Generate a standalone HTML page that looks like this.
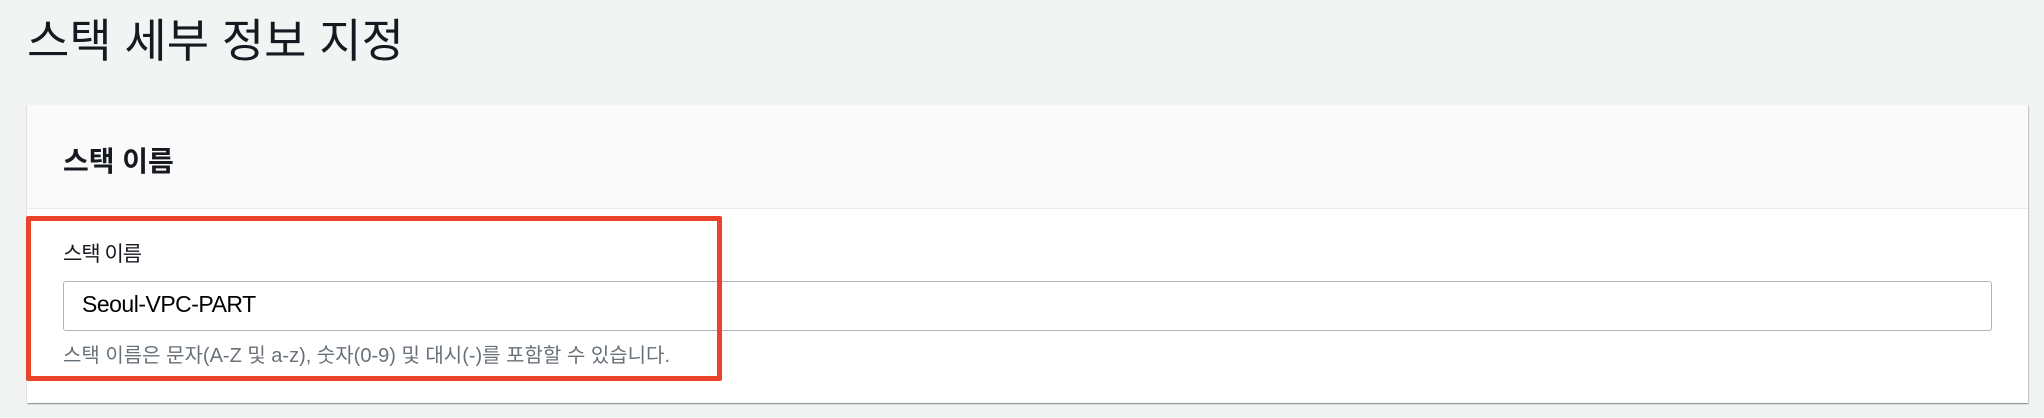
<!DOCTYPE html>
<html><head><meta charset="utf-8"><style>
*{margin:0;padding:0;box-sizing:border-box}
body{width:2044px;height:418px;background:#f2f3f3;font-family:"Liberation Sans","Noto Sans CJK KR",sans-serif;color:#16191f;position:relative;overflow:hidden}
.t{position:absolute;left:27px;top:12px;font-size:46px;letter-spacing:0px;line-height:58px}
.panel{position:absolute;left:27px;top:105px;width:2001px;height:298px;background:#fff;box-shadow:0 1px 1px rgba(0,28,36,.4),1px 1px 1px rgba(0,28,36,.15);}
.hd{height:104px;background:#fafafa;border-bottom:1px solid #eaeded;position:relative}
.hd span{position:absolute;left:36px;top:35px;font-size:28px;font-weight:bold;letter-spacing:0}
.lab{position:absolute;left:63px;top:238px;font-size:21px;letter-spacing:-1px}
.inp{position:absolute;left:63px;top:281px;width:1929px;height:50px;border:1px solid #aab7b8;border-radius:3px;background:#fff}
.inp span{position:absolute;left:18px;top:9px;font-size:23px;letter-spacing:-.5px;color:#000;font-weight:500}
.help{position:absolute;left:63px;top:339px;font-size:20px;color:#687078;letter-spacing:0}
.red{position:absolute;left:26px;top:216px;width:696px;height:165px;border:5px solid #e9432a;border-radius:2px}
</style></head><body>
<div class="t">스택 세부 정보 지정</div>
<div class="panel"><div class="hd"><span>스택 이름</span></div></div>
<div class="lab">스택 이름</div>
<div class="inp"><span>Seoul-VPC-PART</span></div>
<div class="help">스택 이름은 문자(A-Z 및 a-z), 숫자(0-9) 및 대시(-)를 포함할 수 있습니다.</div>
<div class="red"></div>
</body></html>
